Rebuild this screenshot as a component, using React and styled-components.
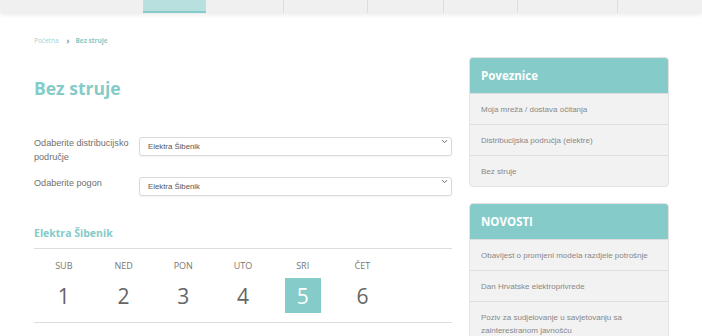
import React from 'react';
import styled, { createGlobalStyle } from 'styled-components';
import { ChevronDown } from 'lucide-react';

const TEAL = '#84cbc9';

const GlobalStyle = createGlobalStyle`
  body {
    margin: 0;
    background: #fff;
    font-family: 'Open Sans', sans-serif;
  }
`;

const NAV_ITEMS = [
  { width: 143 },
  { width: 63, active: true },
  { width: 77 },
  { width: 84, divider: true },
  { width: 76, divider: true },
  { width: 74, divider: true },
  { width: 100, divider: true },
  { width: 85, divider: true },
];

const DAYS = [
  { name: 'SUB', num: 1 },
  { name: 'NED', num: 2 },
  { name: 'PON', num: 3 },
  { name: 'UTO', num: 4 },
  { name: 'SRI', num: 5, active: true },
  { name: 'ČET', num: 6 },
];

const LINKS = ['Moja mreža / dostava očitanja', 'Distribucijska područja (elektre)', 'Bez struje'];

const NEWS = [
  'Obavijest o promjeni modela razdjele potrošnje',
  'Dan Hrvatske elektroprivrede',
  'Poziv za sudjelovanje u savjetovanju sa zainteresiranom javnošću',
];

const App = () => {
  return (
    <>
      <GlobalStyle />
      <TopNav>
        {NAV_ITEMS.map((item, i) => (
          <NavItem key={i} width={item.width} active={item.active} divider={item.divider} />
        ))}
      </TopNav>
      <Container>
        <Breadcrumb>
          <Crumb>Početna</Crumb>
          <Sep>›</Sep>
          <CurrentCrumb>Bez struje</CurrentCrumb>
        </Breadcrumb>
        <Row>
          <Main>
            <Title>Bez struje</Title>
            <FormRow>
              <Label>Odaberite distribucijsko područje</Label>
              <SelectWrap>
                <Select defaultValue="sib">
                  <option value="sib">Elektra Šibenik</option>
                </Select>
                <Chevron size={9} strokeWidth={2.5} />
              </SelectWrap>
            </FormRow>
            <FormRow>
              <Label>Odaberite pogon</Label>
              <SelectWrap>
                <Select defaultValue="sib">
                  <option value="sib">Elektra Šibenik</option>
                </Select>
                <Chevron size={9} strokeWidth={2.5} />
              </SelectWrap>
            </FormRow>
            <AreaTitle>Elektra Šibenik</AreaTitle>
            <DaysGrid>
              {DAYS.map((d) => (
                <Day key={d.num}>
                  <DayName>{d.name}</DayName>
                  <DayNum active={d.active}>{d.num}</DayNum>
                </Day>
              ))}
            </DaysGrid>
          </Main>
          <Aside>
            <Panel>
              <PanelHead>Poveznice</PanelHead>
              {LINKS.map((l) => (
                <PanelItem key={l}>{l}</PanelItem>
              ))}
            </Panel>
            <Panel>
              <PanelHead>NOVOSTI</PanelHead>
              {NEWS.map((n) => (
                <PanelItem key={n}>{n}</PanelItem>
              ))}
            </Panel>
          </Aside>
        </Row>
      </Container>
    </>
  );
};

const TopNav = styled.nav`
  display: flex;
  height: 13px;
  background: #f0f0f0;
  box-shadow: 0 2px 4px rgba(0, 0, 0, 0.08);
`;

const NavItem = styled.div`
  width: ${(props) => props.width}px;
  flex-shrink: 0;
  box-sizing: border-box;
  border-left: ${(props) => (props.divider ? '1px solid #dedede' : 'none')};
  background: ${(props) => (props.active ? '#b7e0df' : 'transparent')};
  border-bottom: ${(props) => (props.active ? `2px solid ${TEAL}` : 'none')};
`;

const Container = styled.div`
  padding: 0 33px 0 34px;
`;

const Breadcrumb = styled.div`
  display: flex;
  align-items: center;
  height: 12px;
  margin-top: 21px;
  font-size: 6.5px;
`;

const Crumb = styled.span`
  color: #9fd2d0;
`;

const Sep = styled.span`
  color: #888;
  margin: 0 6px 0 8px;
  font-size: 8px;
  font-weight: 700;
`;

const CurrentCrumb = styled.span`
  color: ${TEAL};
  font-weight: 700;
`;

const Row = styled.div`
  display: flex;
  gap: 17px;
  margin-top: 11px;
`;

const Main = styled.div`
  width: 418px;
  flex-shrink: 0;
`;

const Title = styled.h1`
  margin: 17px 0 0;
  font-size: 17.5px;
  line-height: 28px;
  font-weight: 700;
  color: ${TEAL};
`;

const FormRow = styled.div`
  display: flex;
  align-items: flex-start;
  margin-top: 29px;
  & + & {
    margin-top: 7px;
  }
`;

const Label = styled.label`
  width: 105px;
  flex-shrink: 0;
  padding-top: 5px;
  font-family: 'Liberation Sans', Arial, sans-serif;
  font-size: 9.1px;
  line-height: 14px;
  color: #6f6f6f;
`;

const SelectWrap = styled.div`
  position: relative;
  width: 313px;
  margin-top: 1px;
`;

const Select = styled.select`
  appearance: none;
  width: 100%;
  height: 19px;
  box-sizing: border-box;
  padding: 0 0 0 8px;
  border: 1px solid #d9d9d9;
  border-radius: 3px;
  background: #fff;
  box-shadow: 0 1px 2px rgba(0, 0, 0, 0.06);
  font-family: 'Liberation Sans', Arial, sans-serif;
  font-size: 7.8px;
  color: #555;
  outline: none;
`;

const Chevron = styled(ChevronDown)`
  position: absolute;
  right: 3px;
  top: 5px;
  color: #666;
  pointer-events: none;
`;

const AreaTitle = styled.h3`
  margin: 29px 0 0;
  font-size: 10.5px;
  line-height: 16px;
  font-weight: 700;
  color: ${TEAL};
  padding-bottom: 7px;
  border-bottom: 1px solid #dddddd;
`;

const DaysGrid = styled.div`
  display: grid;
  grid-template-columns: repeat(7, 1fr);
  padding: 10px 0 9px;
  border-bottom: 1px solid #dddddd;
`;

const Day = styled.div`
  display: flex;
  flex-direction: column;
  align-items: center;
`;

const DayName = styled.div`
  font-size: 9px;
  line-height: 14px;
  color: #777;
`;

const DayNum = styled.div`
  margin-top: 5px;
  width: 36px;
  height: 35px;
  display: flex;
  align-items: center;
  justify-content: center;
  font-size: 21px;
  color: ${(props) => (props.active ? '#fff' : '#666')};
  background: ${(props) => (props.active ? TEAL : 'transparent')};
`;

const Aside = styled.aside`
  width: 200px;
  flex-shrink: 0;
  display: flex;
  flex-direction: column;
  gap: 16px;
`;

const Panel = styled.div`
  border: 1px solid #e3e3e3;
  border-radius: 4px;
  overflow: hidden;
  background: #f2f2f2;
`;

const PanelHead = styled.div`
  background: ${TEAL};
  color: #fff;
  font-size: 11.5px;
  font-weight: 700;
  height: 35px;
  display: flex;
  align-items: center;
  padding: 0 11px;
`;

const PanelItem = styled.div`
  border-top: 1px solid #dedede;
  padding: 9px 11px 8px;
  font-family: 'Liberation Sans', Arial, sans-serif;
  font-size: 8px;
  line-height: 13px;
  color: #888;
`;

export default App;
